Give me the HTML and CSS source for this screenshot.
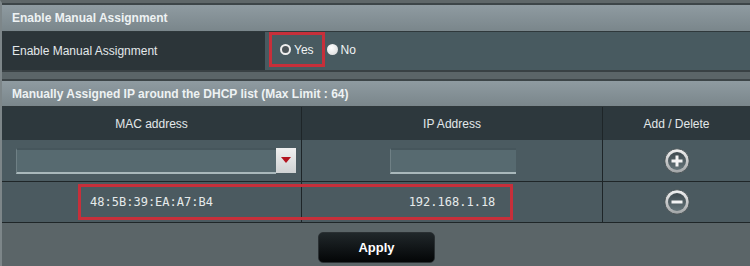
FILE: index.html
```html
<!DOCTYPE html>
<html>
<head>
<meta charset="utf-8">
<link rel="stylesheet" href="styles.css">
</head>
<body>
<div class="page">
  <section class="block first">
    <div class="thead">Enable Manual Assignment</div>
    <div class="setting">
      <div class="label">Enable Manual Assignment</div>
      <div class="value">
        <span class="opt opt-hl"><span class="radio on"></span>Yes</span>
        <span class="opt"><span class="radio off"></span>No</span>
      </div>
    </div>
  </section>
  <section class="block second">
    <div class="thead">Manually Assigned IP around the DHCP list (Max Limit : 64)</div>
    <div class="grid">
      <div class="cell hcell">MAC address</div>
      <div class="cell hcell">IP Address</div>
      <div class="cell hcell last">Add / Delete</div>

      <div class="cell icell mac-cell">
        <div class="combo"><span class="field mac-field"></span><span class="drop"><svg width="10" height="6" viewBox="0 0 10 6"><path d="M0 0H10L5 6Z" fill="#b3141f"/></svg></span></div>
      </div>
      <div class="cell icell"><span class="field ip-field"></span></div>
      <div class="cell icell last">
        <svg class="ico" width="26" height="26" viewBox="0 0 26 26">
          <defs>
            <linearGradient id="rg" x1="0" y1="0" x2="0" y2="1"><stop offset="0" stop-color="#f2f2f2"/><stop offset="1" stop-color="#9fa3a5"/></linearGradient>
            <linearGradient id="ig" x1="0" y1="0" x2="0" y2="1"><stop offset="0" stop-color="#3e4a4f"/><stop offset="1" stop-color="#66757a"/></linearGradient>
          </defs>
          <circle cx="13" cy="13" r="12.2" fill="url(#rg)" stroke="#3c4649" stroke-width="0.8"/>
          <circle cx="13" cy="13" r="9" fill="url(#ig)"/>
          <path d="M13 7.5V18.5M7.5 13H18.5" stroke="#f4f4f4" stroke-width="3"/>
        </svg>
      </div>

      <div class="cell dcell mono">48:5B:39:EA:A7:B4</div>
      <div class="cell dcell mono">192.168.1.18</div>
      <div class="cell dcell last">
        <svg class="ico" width="26" height="26" viewBox="0 0 26 26">
          <circle cx="13" cy="13" r="12.2" fill="url(#rg)" stroke="#3c4649" stroke-width="0.8"/>
          <circle cx="13" cy="13" r="9" fill="url(#ig)"/>
          <path d="M7.5 13H18.5" stroke="#f4f4f4" stroke-width="3"/>
        </svg>
      </div>
      <div class="hl-box"></div>
    </div>
  </section>
  <div class="actions"><button class="apply">Apply</button></div>
</div>
</body>
</html>
```
FILE: styles.css
```css
* { box-sizing: border-box; }
html, body { margin: 0; padding: 0; }
body {
  background: #5b6568;
  font-family: "Liberation Sans", Arial, sans-serif;
  font-size: 12px;
  color: #e3e8ea;
  width: 750px;
  height: 266px;
  overflow: hidden;
}
.page {
  border-left: 2px solid #7d8689;
  min-height: 266px;
  border-top: 3px solid #5f6769;
}
.block { display: flex; flex-direction: column; }
.thead {
  height: 27px;
  display: flex;
  align-items: center;
  padding-left: 10px;
  font-weight: bold;
  color: #eef2f3;
  background: linear-gradient(#8f9ba1, #7a868b);
  border-top: 2px solid #3d4548;
  border-bottom: 1px solid #2f383b;
}
.first .thead { height: 29px; }
.setting {
  display: flex;
  height: 40px;
  border-bottom: 2px solid #394144;
}
.label {
  width: 263px;
  background: #2c3539;
  display: flex;
  align-items: center;
  padding-left: 10px;
}
.value {
  flex: 1;
  background: #485a60;
  display: flex;
  align-items: flex-start;
  padding-left: 4px;
  color: #f0f3f4;
}
.opt {
  height: 35px;
  display: flex;
  align-items: center;
  gap: 2px;
}
.opt-hl {
  border: 3px solid #c72f3a;
  padding: 0 8px 0 8px;
  margin-right: 2px;
}
.radio {
  width: 11px;
  height: 11px;
  border-radius: 50%;
  display: inline-block;
  margin-right: 1px;
}
.radio.on {
  border: 2px solid #eeeeee;
  background: #4c5559;
}
.radio.off {
  background: radial-gradient(circle at 40% 35%, #ffffff, #d6d6d6);
}
.second { margin-top: 7px; }
.second .thead { height: 28px; }
.grid {
  position: relative;
  display: grid;
  grid-template-columns: 300px 301px 1fr;
}
.cell {
  display: flex;
  align-items: center;
  justify-content: center;
  border-right: 1px solid #1e2528;
}
.cell.last { border-right: none; }
.hcell {
  height: 33px;
  background: #2d383d;
  color: #e3e8ea;
}
.icell {
  height: 42px;
  background: #4b5b61;
  border-bottom: 1px solid #1f2628;
}
.mac-cell {
  justify-content: flex-start;
  padding-left: 14px;
}
.dcell {
  height: 41px;
  background: #4b5a60;
  border-bottom: 1px solid #1f2628;
}
.mono {
  font-family: "DejaVu Sans Mono", "Liberation Mono", monospace;
  font-size: 12px;
  color: #e6eaeb;
}
.combo {
  display: flex;
  align-items: stretch;
}
.field {
  display: block;
  height: 26px;
  background: #576a70;
  border-top: 2px solid #46565c;
  border-left: 1px solid #6f8085;
  border-bottom: 2px solid #a9b8bb;
}
.mac-field { width: 260px; }
.ip-field { width: 126px; margin-left: 2px; }
.drop {
  width: 20px;
  height: 25px;
  background: linear-gradient(#f0f0f0, #cfd2d3);
  display: flex;
  align-items: center;
  justify-content: center;
}
.ico { display: block; }
.hl-box {
  position: absolute;
  left: 76px;
  top: 77px;
  width: 435px;
  height: 36px;
  border: 3px solid #c72f3a;
  pointer-events: none;
}
.actions {
  display: flex;
  justify-content: center;
  padding-top: 9px;
}
.apply {
  width: 117px;
  height: 31px;
  margin-left: 1px;
  border: 1px solid #2a3033;
  border-radius: 5px;
  background: linear-gradient(#20272a, #030506);
  color: #ffffff;
  font-family: "Liberation Sans", Arial, sans-serif;
  font-weight: bold;
  font-size: 13px;
}
```
